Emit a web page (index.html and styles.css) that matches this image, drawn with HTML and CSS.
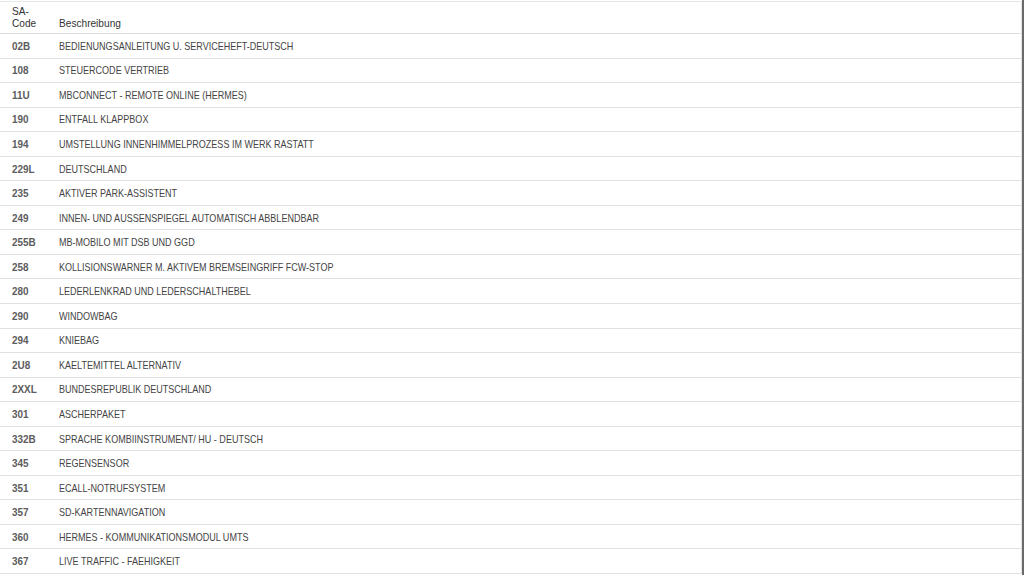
FILE: index.html
```html
<!DOCTYPE html>
<html lang="de">
<head>
<meta charset="utf-8">
<title>SA-Codes</title>
<link rel="stylesheet" href="styles.css">
</head>
<body>
<div class="frame">
  <div class="table">
    <div class="row head">
      <div class="code"><span class="t">SA-<br>Code</span></div>
      <div class="desc"><span class="t">Beschreibung</span></div>
    </div>
    <div class="row"><div class="code"><span class="t">02B</span></div><div class="desc"><span class="t">BEDIENUNGSANLEITUNG U. SERVICEHEFT-DEUTSCH</span></div></div>
    <div class="row"><div class="code"><span class="t">108</span></div><div class="desc"><span class="t">STEUERCODE VERTRIEB</span></div></div>
    <div class="row"><div class="code"><span class="t">11U</span></div><div class="desc"><span class="t">MBCONNECT - REMOTE ONLINE (HERMES)</span></div></div>
    <div class="row"><div class="code"><span class="t">190</span></div><div class="desc"><span class="t">ENTFALL KLAPPBOX</span></div></div>
    <div class="row"><div class="code"><span class="t">194</span></div><div class="desc"><span class="t">UMSTELLUNG INNENHIMMELPROZESS IM WERK RASTATT</span></div></div>
    <div class="row"><div class="code"><span class="t">229L</span></div><div class="desc"><span class="t">DEUTSCHLAND</span></div></div>
    <div class="row"><div class="code"><span class="t">235</span></div><div class="desc"><span class="t">AKTIVER PARK-ASSISTENT</span></div></div>
    <div class="row"><div class="code"><span class="t">249</span></div><div class="desc"><span class="t">INNEN- UND AUSSENSPIEGEL AUTOMATISCH ABBLENDBAR</span></div></div>
    <div class="row"><div class="code"><span class="t">255B</span></div><div class="desc"><span class="t">MB-MOBILO MIT DSB UND GGD</span></div></div>
    <div class="row"><div class="code"><span class="t">258</span></div><div class="desc"><span class="t">KOLLISIONSWARNER M. AKTIVEM BREMSEINGRIFF FCW-STOP</span></div></div>
    <div class="row"><div class="code"><span class="t">280</span></div><div class="desc"><span class="t">LEDERLENKRAD UND LEDERSCHALTHEBEL</span></div></div>
    <div class="row"><div class="code"><span class="t">290</span></div><div class="desc"><span class="t">WINDOWBAG</span></div></div>
    <div class="row"><div class="code"><span class="t">294</span></div><div class="desc"><span class="t">KNIEBAG</span></div></div>
    <div class="row"><div class="code"><span class="t">2U8</span></div><div class="desc"><span class="t">KAELTEMITTEL ALTERNATIV</span></div></div>
    <div class="row"><div class="code"><span class="t">2XXL</span></div><div class="desc"><span class="t">BUNDESREPUBLIK DEUTSCHLAND</span></div></div>
    <div class="row"><div class="code"><span class="t">301</span></div><div class="desc"><span class="t">ASCHERPAKET</span></div></div>
    <div class="row"><div class="code"><span class="t">332B</span></div><div class="desc"><span class="t">SPRACHE KOMBIINSTRUMENT/ HU - DEUTSCH</span></div></div>
    <div class="row"><div class="code"><span class="t">345</span></div><div class="desc"><span class="t">REGENSENSOR</span></div></div>
    <div class="row"><div class="code"><span class="t">351</span></div><div class="desc"><span class="t">ECALL-NOTRUFSYSTEM</span></div></div>
    <div class="row"><div class="code"><span class="t">357</span></div><div class="desc"><span class="t">SD-KARTENNAVIGATION</span></div></div>
    <div class="row"><div class="code"><span class="t">360</span></div><div class="desc"><span class="t">HERMES - KOMMUNIKATIONSMODUL UMTS</span></div></div>
    <div class="row"><div class="code"><span class="t">367</span></div><div class="desc"><span class="t">LIVE TRAFFIC - FAEHIGKEIT</span></div></div>
  </div>
</div>
</body>
</html>
```
FILE: styles.css
```css
html, body {
  margin: 0;
  padding: 0;
  background: #fff;
}
body {
  font-family: "Liberation Sans", Arial, sans-serif;
  font-size: 11px;
  color: #444;
}
.frame {
  width: 1022px;
  height: 575px;
  border-right: 2px solid #6a6a6a;
  overflow: hidden;
}
.table {
  width: 1021px;
  border-right: 1px solid #e4e4e4;
  border-top: 1px solid #e8e8e8;
  margin-top: 1px;
}
.row {
  display: flex;
  align-items: center;
  box-sizing: border-box;
  height: 24.55px;
  border-bottom: 1px solid #e0e0e0;
}
.row.head {
  height: 32px;
  align-items: flex-end;
  padding-bottom: 4px;
  border-bottom: 1px solid #dcdcdc;
}
.code {
  width: 47px;
  padding-left: 12px;
  flex: none;
  font-weight: bold;
  color: #5c5c5c;
}
.desc {
  flex: 1;
  color: #444;
}
.t {
  display: inline-block;
  white-space: nowrap;
  transform: scaleX(0.82);
  transform-origin: left center;
}
.code .t {
  transform: scaleX(0.9);
}
.head .code, .head .desc {
  font-weight: normal;
  color: #333;
  line-height: 12px;
}
.head .t {
  transform: scaleX(0.92);
}
```
